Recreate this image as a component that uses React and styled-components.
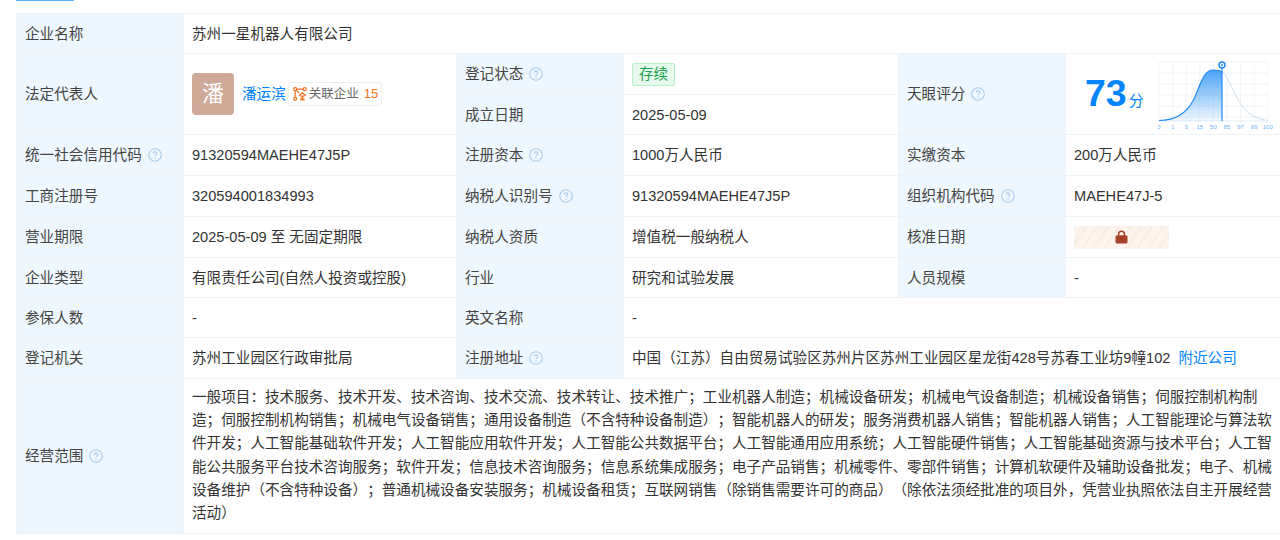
import React from "react";
import styled, { createGlobalStyle } from "styled-components";

const scopeText =
  "一般项目：技术服务、技术开发、技术咨询、技术交流、技术转让、技术推广；工业机器人制造；机械设备研发；机械电气设备制造；机械设备销售；伺服控制机构制造；伺服控制机构销售；机械电气设备销售；通用设备制造（不含特种设备制造）；智能机器人的研发；服务消费机器人销售；智能机器人销售；人工智能理论与算法软件开发；人工智能基础软件开发；人工智能应用软件开发；人工智能公共数据平台；人工智能通用应用系统；人工智能硬件销售；人工智能基础资源与技术平台；人工智能公共服务平台技术咨询服务；软件开发；信息技术咨询服务；信息系统集成服务；电子产品销售；机械零件、零部件销售；计算机软硬件及辅助设备批发；电子、机械设备维护（不含特种设备）；普通机械设备安装服务；机械设备租赁；互联网销售（除销售需要许可的商品）（除依法须经批准的项目外，凭营业执照依法自主开展经营活动）";

function HelpIcon() {
  return (
    <HelpSvg viewBox="0 0 14 14">
      <circle cx="7" cy="7" r="6.3" fill="none" stroke="#a9cbe9" strokeWidth="1.1" />
      <path
        d="M5.2 5.6c0-1 .8-1.7 1.8-1.7s1.8.7 1.8 1.6c0 1.3-1.8 1.4-1.8 2.7"
        fill="none"
        stroke="#a9cbe9"
        strokeWidth="1.1"
      />
      <circle cx="7" cy="10.2" r=".75" fill="#a9cbe9" />
    </HelpSvg>
  );
}

function RelationIcon() {
  return (
    <svg width="14" height="14" viewBox="0 0 14 14" fill="none" stroke="#f5701f" strokeWidth="1.2">
      <circle cx="2.2" cy="2.2" r="1.5" />
      <circle cx="11.8" cy="2.2" r="1.5" />
      <circle cx="2.2" cy="11.8" r="1.5" />
      <path d="M3.7 2.2h6.6M2.2 3.7v6.6M3.3 3.3l2.9 2.9" />
      <path d="M6 8.8 9.4 5.8l3.4 3M7.4 9.2h4M9.4 9.2v3.6M7.2 13h4.6M7.7 11l.6 1.2M11.1 11l-.6 1.2" />
    </svg>
  );
}

function LockIcon() {
  return (
    <svg width="13" height="14" viewBox="0 0 13 14">
      <path d="M3.6 6V4.2a2.9 2.9 0 0 1 5.8 0V6" fill="none" stroke="#a8412a" strokeWidth="1.5" />
      <rect x="0.5" y="5.2" width="12" height="8.3" rx="1.6" fill="#a8412a" />
    </svg>
  );
}

function ScoreChart() {
  const ticks = ["0", "1", "3", "15", "50", "85", "97", "99", "100"];
  const columns = [0, 13.6, 27.2, 40.8, 54.4, 68, 81.6, 95.2, 108.8];
  const lines = [1, 12, 23, 34, 45, 56];
  return (
    <svg width="116" height="72" viewBox="0 0 116 72">
      <defs>
        <linearGradient id="scoreFill" x1="0" y1="0" x2="0" y2="1">
          <stop offset="0" stopColor="#4ba3f8" />
          <stop offset="1" stopColor="#4ba3f8" stopOpacity="0.08" />
        </linearGradient>
      </defs>
      {columns.map((x) => (
        <line key={x} x1={x + 1} y1="1" x2={x + 1} y2="60" stroke="#eff4fa" />
      ))}
      {lines.map((y) => (
        <line key={y} x1="1" y1={y} x2="110" y2={y} stroke="#eff4fa" />
      ))}
      <line x1="1" y1="60" x2="110" y2="60" stroke="#e4edf6" />
      <path
        d="M64 10C72 18 76 34 84 45C90 53 98 58 110 59.4"
        fill="none"
        stroke="#cfdeeb"
        strokeWidth="1"
      />
      <path
        d="M1 59.5C16 59.5 28 54 36 38C43 22 46 9 55 9C59 9 62 9 64 11V60H1Z"
        fill="url(#scoreFill)"
      />
      <path
        d="M1 59.5C16 59.5 28 54 36 38C43 22 46 9 55 9C59 9 62 9 64 11"
        fill="none"
        stroke="#1f8af5"
        strokeWidth="1.2"
      />
      <line x1="64" y1="7" x2="64" y2="60" stroke="#1f8af5" strokeWidth="1.2" />
      <circle cx="64" cy="3.9" r="3.7" fill="#1f8af5" />
      <circle cx="64" cy="3.9" r="2.2" fill="#fff" />
      <circle cx="64" cy="3.9" r="1" fill="#1f8af5" />
      {ticks.map((t, i) => (
        <ChartTick key={t} x={columns[i] + 1} y="67.5" textAnchor="middle">
          {t}
        </ChartTick>
      ))}
    </svg>
  );
}

export default function App() {
  return (
    <>
      <GlobalStyle />
      <Page>
        <TabLine />
        <InfoTable>
          <colgroup>
            <col width="167" />
            <col width="273" />
            <col width="167" />
            <col width="275" />
            <col width="167" />
            <col width="215" />
          </colgroup>
          <tbody>
            <Row $h={40}>
              <Label>企业名称</Label>
              <Value colSpan={5}>苏州一星机器人有限公司</Value>
            </Row>
            <Row $h={41}>
              <Label rowSpan={2}>法定代表人</Label>
              <Value rowSpan={2}>
                <Person>
                  <Avatar>潘</Avatar>
                  <PersonName>潘运滨</PersonName>
                  <RelationTag>
                    <RelationIcon />
                    <RelationText>关联企业</RelationText>
                    <RelationCount>15</RelationCount>
                  </RelationTag>
                </Person>
              </Value>
              <Label>
                登记状态
                <HelpIcon />
              </Label>
              <Value>
                <StatusTag>存续</StatusTag>
              </Value>
              <Label rowSpan={2}>
                天眼评分
                <HelpIcon />
              </Label>
              <ScoreCell rowSpan={2}>
                <ScoreWrap>
                  <ScoreNumber>
                    73<ScoreUnit>分</ScoreUnit>
                  </ScoreNumber>
                  <ScoreChart />
                </ScoreWrap>
              </ScoreCell>
            </Row>
            <Row $h={40}>
              <Label>成立日期</Label>
              <Value>2025-05-09</Value>
            </Row>
            <Row $h={41}>
              <Label>
                统一社会信用代码
                <HelpIcon />
              </Label>
              <Value>91320594MAEHE47J5P</Value>
              <Label>
                注册资本
                <HelpIcon />
              </Label>
              <Value>1000万人民币</Value>
              <Label>实缴资本</Label>
              <Value>200万人民币</Value>
            </Row>
            <Row $h={41}>
              <Label>工商注册号</Label>
              <Value>320594001834993</Value>
              <Label>
                纳税人识别号
                <HelpIcon />
              </Label>
              <Value>91320594MAEHE47J5P</Value>
              <Label>
                组织机构代码
                <HelpIcon />
              </Label>
              <Value>MAEHE47J-5</Value>
            </Row>
            <Row $h={41}>
              <Label>营业期限</Label>
              <Value>2025-05-09 至 无固定期限</Value>
              <Label>纳税人资质</Label>
              <Value>增值税一般纳税人</Value>
              <Label>核准日期</Label>
              <Value>
                <LockedBadge>
                  <LockIcon />
                </LockedBadge>
              </Value>
            </Row>
            <Row $h={40}>
              <Label>企业类型</Label>
              <Value>有限责任公司(自然人投资或控股)</Value>
              <Label>行业</Label>
              <Value>研究和试验发展</Value>
              <Label>人员规模</Label>
              <Value>-</Value>
            </Row>
            <Row $h={40}>
              <Label>参保人数</Label>
              <Value>-</Value>
              <Label>英文名称</Label>
              <Value colSpan={3}>-</Value>
            </Row>
            <Row $h={41}>
              <Label>登记机关</Label>
              <Value>苏州工业园区行政审批局</Value>
              <Label>
                注册地址
                <HelpIcon />
              </Label>
              <Value colSpan={3}>
                中国（江苏）自由贸易试验区苏州片区苏州工业园区星龙街428号苏春工业坊9幢102
                <NearbyLink>附近公司</NearbyLink>
              </Value>
            </Row>
            <Row $h={155}>
              <Label>
                经营范围
                <HelpIcon />
              </Label>
              <ScopeCell colSpan={5}>{scopeText}</ScopeCell>
            </Row>
          </tbody>
        </InfoTable>
      </Page>
    </>
  );
}

const GlobalStyle = createGlobalStyle`
  html, body {
    margin: 0;
    padding: 0;
    background: #fff;
    overflow: hidden;
  }
  body {
    font-family: "Liberation Sans", "Noto Sans CJK SC", sans-serif;
    font-size: 14.6px;
    color: #333;
    text-spacing-trim: space-all;
  }
`;

const Page = styled.div`
  width: 1280px;
  height: 540px;
  padding-left: 16px;
  box-sizing: border-box;
  overflow: hidden;
`;

const TabLine = styled.div`
  width: 58px;
  height: 1px;
  margin-bottom: 12px;
  background: #5aaef7;
`;

const InfoTable = styled.table`
  width: 1264px;
  table-layout: fixed;
  border-collapse: collapse;
  font-size: 14.6px;
`;

const Row = styled.tr`
  height: ${(p) => p.$h}px;
`;

const Label = styled.td`
  padding: 0 8px;
  background: #eff7fe;
  border: 1px solid #eff3f8;
  color: #444;
  line-height: 22px;
  white-space: nowrap;
`;

const Value = styled.td`
  padding: 0 8px;
  border: 1px solid #eff3f8;
  color: #333;
  line-height: 22px;
`;

const ScoreCell = styled(Value)`
  padding: 0;
`;

const ScopeCell = styled(Value)`
  padding: 7px 8px 8px;
  line-height: 23.2px;
`;

const HelpSvg = styled.svg`
  display: inline-block;
  width: 14px;
  height: 14px;
  margin-left: 6px;
  vertical-align: -2px;
`;

const Person = styled.div`
  display: flex;
  align-items: center;
`;

const Avatar = styled.div`
  display: flex;
  align-items: center;
  justify-content: center;
  width: 42px;
  height: 42px;
  border-radius: 4px;
  background: #cfaa98;
  color: #fff;
  font-size: 22px;
`;

const PersonName = styled.span`
  margin-left: 8px;
  color: #0084ff;
`;

const RelationTag = styled.span`
  display: inline-flex;
  align-items: center;
  width: 94px;
  height: 24px;
  margin-left: 2px;
  padding-left: 4px;
  box-sizing: border-box;
  border: 1px solid #eee;
  border-radius: 3px;
  color: #666;
  font-size: 12.5px;
`;

const RelationText = styled.span`
  margin-left: 2px;
  white-space: nowrap;
`;

const RelationCount = styled.span`
  margin-left: 5px;
  color: #f5701f;
  font-size: 13px;
`;

const StatusTag = styled.span`
  display: inline-block;
  width: 43px;
  height: 23px;
  box-sizing: border-box;
  border: 1px solid #b9eecb;
  border-radius: 2px;
  background: #e5faec;
  color: #1d9f50;
  line-height: 21px;
  text-align: center;
`;

const ScoreWrap = styled.div`
  display: flex;
  align-items: center;
  padding: 6px 0 0 19px;
`;

const ScoreNumber = styled.div`
  width: 73px;
  white-space: nowrap;
  color: #0084ff;
  font-size: 37.5px;
  font-weight: 700;
  line-height: 40px;
`;

const ScoreUnit = styled.span`
  margin-left: 2px;
  font-size: 15px;
  font-weight: 400;
`;

const ChartTick = styled.text`
  fill: #6db4f5;
  font-family: "Liberation Sans", sans-serif;
  font-size: 6px;
`;

const LockedBadge = styled.div`
  display: flex;
  align-items: center;
  justify-content: center;
  width: 95px;
  height: 23px;
  border-radius: 2px;
  background: repeating-linear-gradient(
    -55deg,
    #fbf3ec 0,
    #fbf3ec 8px,
    #f6e9dc 8px,
    #f6e9dc 9px
  );
`;

const NearbyLink = styled.a`
  margin-left: 8px;
  color: #0084ff;
`;
